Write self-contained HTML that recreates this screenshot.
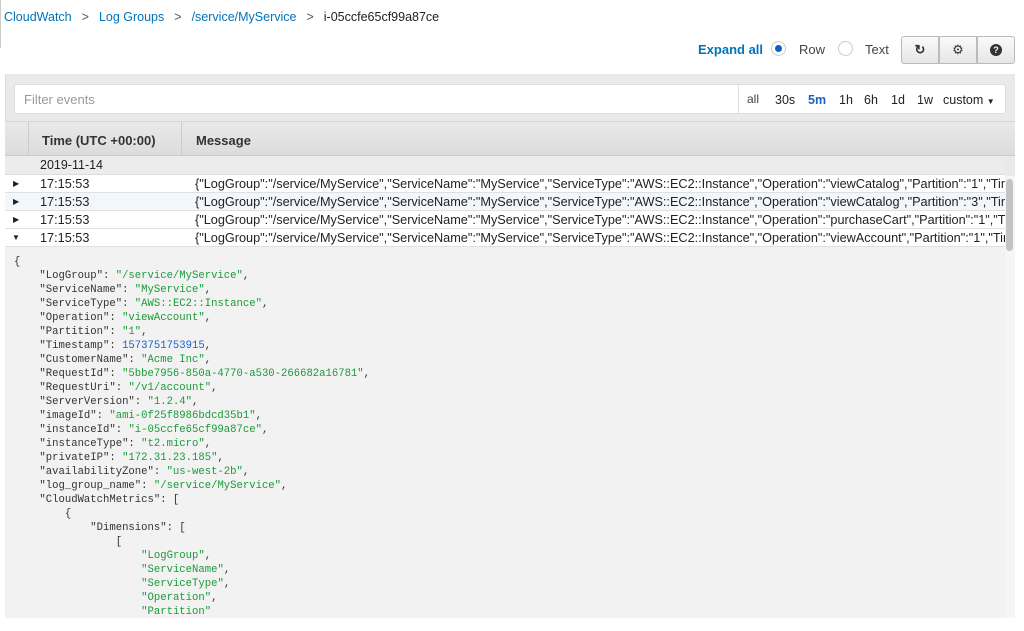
<!DOCTYPE html>
<html><head><meta charset="utf-8"><style>
*{box-sizing:border-box;margin:0;padding:0}
body{width:1024px;height:631px;background:#fff;font-family:"Liberation Sans",sans-serif;font-size:13px;color:#222;position:relative;overflow:hidden}
.a{position:absolute}
.bc{top:10px;left:4px;font-size:12.5px;white-space:nowrap}
.bc a{color:#0073bb;text-decoration:none}
.bc .s{color:#555;margin:0 10px}
.panel{top:74px;left:5px;width:1010px;height:544px;background:#eaeaea;border-left:1px solid #ddd}
.filter{top:84px;left:14px;width:992px;height:30px;background:#fff;border:1px solid #ddd;border-radius:3px}
.hdr{top:121px;left:5px;width:1010px;height:35px;background:linear-gradient(#e9e9e9,#dcdcdc);border-top:1px solid #d5d5d5;border-bottom:1px solid #ccc;font-weight:bold;font-size:13px;color:#333}
.row{left:5px;width:1000px;height:18px;border-bottom:1px solid #e0e0e0;background:#fff;font-size:12.7px;white-space:nowrap;overflow:hidden}
.row span{position:absolute;top:2px}
.json{top:247px;left:5px;width:1000px;height:371px;background:#f2f2f2;font-family:"Liberation Mono",monospace;font-size:10.6px;line-height:14px;padding:8px 0 0 9px;white-space:pre;color:#333}
.g{color:#1a9a3a}.n{color:#1b62c4}
.btn{top:36px;height:28px;width:38px;background:linear-gradient(#fafafa,#e6e6e6);border:1px solid #bbb}
</style></head><body>
<div class="a" style="left:0;top:0;width:1px;height:48px;background:#ccc"></div>
<div class="a bc"><a>CloudWatch</a><span class="s">&gt;</span><a>Log Groups</a><span class="s">&gt;</span><a>/service/MyService</a><span class="s">&gt;</span><span>i-05ccfe65cf99a87ce</span></div>
<div class="a" style="top:42px;left:698px;color:#0073bb;font-weight:bold">Expand all</div>
<div class="a" style="top:41px;left:771px;width:15px;height:15px;border-radius:50%;border:1px solid #ccc;background:#fff"><div style="margin:3px;width:7px;height:7px;border-radius:50%;background:#0a5fc9"></div></div>
<div class="a" style="top:42px;left:799px;color:#444">Row</div>
<div class="a" style="top:41px;left:838px;width:15px;height:15px;border-radius:50%;border:1px solid #ccc;background:#fff"></div>
<div class="a" style="top:42px;left:865px;color:#444">Text</div>
<div class="a btn" style="left:901px;border-radius:3px 0 0 3px;text-align:center;line-height:26px;font-weight:bold;color:#333">&#x21bb;</div>
<div class="a btn" style="left:939px;text-align:center;line-height:26px;color:#333">&#9881;</div>
<div class="a btn" style="left:977px;border-radius:0 3px 3px 0"><div style="margin:7px auto;width:12px;height:12px;border-radius:50%;background:#333;color:#fff;font-size:9px;font-weight:bold;text-align:center;line-height:12px">?</div></div>
<div class="a panel"></div>
<div class="a filter"><span class="a" style="left:9px;top:7px;color:#999">Filter events</span>
<div class="a" style="left:723px;top:0;height:28px;border-left:1px solid #ddd"></div>
<span class="a" style="left:732px;top:7px;color:#444;font-size:12px">all</span>
<span class="a" style="left:760px;top:8px;font-size:12.5px">30s</span>
<span class="a" style="left:793px;top:8px;font-size:12.5px;color:#1b62c4;font-weight:bold">5m</span>
<span class="a" style="left:824px;top:8px;font-size:12.5px">1h</span>
<span class="a" style="left:849px;top:8px;font-size:12.5px">6h</span>
<span class="a" style="left:876px;top:8px;font-size:12.5px">1d</span>
<span class="a" style="left:902px;top:8px;font-size:12.5px">1w</span>
<span class="a" style="left:928px;top:8px;font-size:12.5px">custom <span style="font-size:8px">&#9660;</span></span></div>
<div class="a hdr"><div class="a" style="left:23px;top:0;height:34px;border-left:1px solid #ccc"></div><span class="a" style="left:37px;top:11px">Time (UTC +00:00)</span><div class="a" style="left:176px;top:0;height:34px;border-left:1px solid #ccc"></div><span class="a" style="left:191px;top:11px">Message</span></div>
<div class="a" style="top:156px;left:5px;width:1000px;height:19px;background:#ececec;border-bottom:1px solid #ddd"><span class="a" style="left:35px;top:2px;font-size:12.5px">2019-11-14</span></div>
<div class="a row" style="top:175px"><span style="left:8px;font-size:8px;top:4px">&#9654;</span><span style="left:35px">17:15:53</span><span style="left:190px">{"LogGroup":"/service/MyService","ServiceName":"MyService","ServiceType":"AWS::EC2::Instance","Operation":"viewCatalog","Partition":"1","Timestamp"</span></div>
<div class="a row" style="top:193px;background:#f1f7fd"><span style="left:8px;font-size:8px;top:4px">&#9654;</span><span style="left:35px">17:15:53</span><span style="left:190px">{"LogGroup":"/service/MyService","ServiceName":"MyService","ServiceType":"AWS::EC2::Instance","Operation":"viewCatalog","Partition":"3","Timestamp"</span></div>
<div class="a row" style="top:211px"><span style="left:8px;font-size:8px;top:4px">&#9654;</span><span style="left:35px">17:15:53</span><span style="left:190px">{"LogGroup":"/service/MyService","ServiceName":"MyService","ServiceType":"AWS::EC2::Instance","Operation":"purchaseCart","Partition":"1","Timestamp"</span></div>
<div class="a row" style="top:229px"><span style="left:7px;font-size:8px;top:4px">&#9660;</span><span style="left:35px">17:15:53</span><span style="left:190px">{"LogGroup":"/service/MyService","ServiceName":"MyService","ServiceType":"AWS::EC2::Instance","Operation":"viewAccount","Partition":"1","Timestamp"</span></div>
<div class="a json">{
    "LogGroup": <span class="g">"/service/MyService"</span>,
    "ServiceName": <span class="g">"MyService"</span>,
    "ServiceType": <span class="g">"AWS::EC2::Instance"</span>,
    "Operation": <span class="g">"viewAccount"</span>,
    "Partition": <span class="g">"1"</span>,
    "Timestamp": <span class="n">1573751753915</span>,
    "CustomerName": <span class="g">"Acme Inc"</span>,
    "RequestId": <span class="g">"5bbe7956-850a-4770-a530-266682a16781"</span>,
    "RequestUri": <span class="g">"/v1/account"</span>,
    "ServerVersion": <span class="g">"1.2.4"</span>,
    "imageId": <span class="g">"ami-0f25f8986bdcd35b1"</span>,
    "instanceId": <span class="g">"i-05ccfe65cf99a87ce"</span>,
    "instanceType": <span class="g">"t2.micro"</span>,
    "privateIP": <span class="g">"172.31.23.185"</span>,
    "availabilityZone": <span class="g">"us-west-2b"</span>,
    "log_group_name": <span class="g">"/service/MyService"</span>,
    "CloudWatchMetrics": [
        {
            "Dimensions": [
                [
                    <span class="g">"LogGroup"</span>,
                    <span class="g">"ServiceName"</span>,
                    <span class="g">"ServiceType"</span>,
                    <span class="g">"Operation"</span>,
                    <span class="g">"Partition"</span></div>
<div class="a" style="top:176px;left:1005px;width:10px;height:442px;background:#f5f5f5"></div>
<div class="a" style="top:179px;left:1006px;width:7px;height:72px;border-radius:4px;background:#c4c4c4"></div>
</body></html>
